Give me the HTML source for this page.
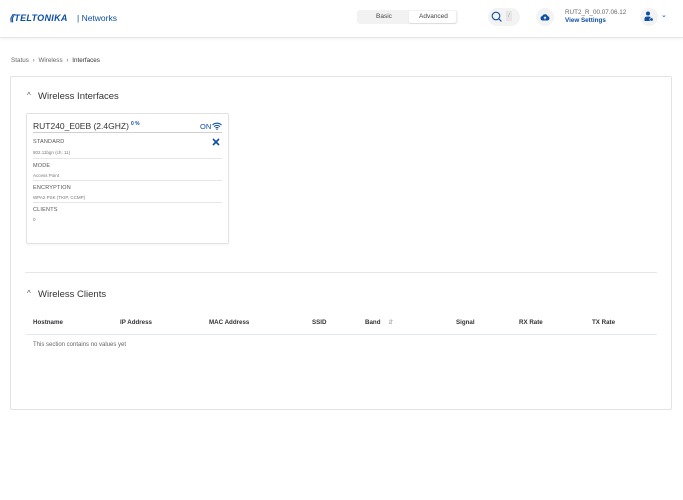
<!DOCTYPE html>
<html><head><meta charset="utf-8"><style>
*{margin:0;padding:0;box-sizing:border-box}
body{width:683px;height:500px;background:#fff;font-family:"Liberation Sans",sans-serif;position:relative;overflow:hidden;color:#333}
.a{position:absolute;white-space:nowrap}
.hdr{position:absolute;left:0;top:0;width:683px;height:38px;background:#fff;border-bottom:1px solid #e6e6e6;box-shadow:0 1px 3px rgba(0,0,0,.06)}
.blue{color:#0d4fa3}
.panel{position:absolute;left:10px;top:76px;width:662px;height:334px;border:1px solid #e3e3e3;border-radius:2px}
.card{position:absolute;left:26px;top:113px;width:203px;height:131px;border:1px solid #e3e3e3;border-radius:2px;box-shadow:0 1px 2px rgba(0,0,0,.05)}
.lbl{font-size:5.5px;color:#555;letter-spacing:.2px}
.val{font-size:4.5px;color:#777}
.hl{position:absolute;height:1px;background:#e6e6e6}
.th{font-size:6.2px;font-weight:bold;color:#333}
</style></head><body>
<div class="hdr"></div>
<div class="a" style="left:9px;top:13px;font-size:9px;font-weight:bold;font-style:italic;color:#0d4fa3;letter-spacing:.3px">⟪TELTONIKA</div>
<div class="a" style="left:77px;top:13px;font-size:8.5px;color:#0d4fa3">| Networks</div>
<div class="a" style="left:357px;top:10px;width:101px;height:14px;background:#f2f2f2;border-radius:3px"></div>
<div class="a" style="left:409px;top:11px;width:47px;height:12px;background:#fff;border-radius:2px;box-shadow:0 1px 1px rgba(0,0,0,.1)"></div>
<div class="a" style="left:376px;top:13px;font-size:6.5px;color:#444">Basic</div>
<div class="a" style="left:419px;top:13px;font-size:6.5px;color:#444">Advanced</div>
<div class="a" style="left:488px;top:8px;width:32px;height:18px;background:#f3f3f3;border-radius:9px"></div>
<svg class="a" style="left:491px;top:11px" width="12" height="12" viewBox="0 0 12 12"><circle cx="5" cy="5" r="3.8" fill="none" stroke="#0d4fa3" stroke-width="1.1"/><line x1="7.7" y1="7.7" x2="10.5" y2="10.5" stroke="#0d4fa3" stroke-width="1.1"/></svg>
<div class="a" style="left:506px;top:11px;width:6px;height:10px;background:#e6e6e6;font-size:5px;color:#999;text-align:center;line-height:10px">/</div>
<div class="a" style="left:536px;top:8px;width:18px;height:18px;background:#f3f3f3;border-radius:9px"></div>
<svg class="a" style="left:540px;top:13px" width="10" height="8" viewBox="0 0 10 8"><path d="M2.5 7.5 A2.3 2.3 0 0 1 2.3 3 A3 3 0 0 1 7.8 3.2 A2.2 2.2 0 0 1 7.6 7.5Z" fill="#0d4fa3"/><path d="M5 6.5V4M3.8 5.2L5 4 6.2 5.2" stroke="#fff" stroke-width=".8" fill="none"/></svg>
<div class="a" style="left:565px;top:9px;font-size:6.3px;color:#666">RUT2_R_00.07.06.12</div>
<div class="a blue" style="left:565px;top:17px;font-size:6.3px;font-weight:bold">View Settings</div>
<div class="a" style="left:640px;top:8px;width:18px;height:18px;background:#f3f3f3;border-radius:9px"></div>
<svg class="a" style="left:644px;top:11px" width="10" height="11" viewBox="0 0 10 11"><circle cx="4" cy="2.5" r="2" fill="#0d4fa3"/><path d="M0.5 10V7.5Q0.5 5.5 4 5.5Q7 5.5 7 7V10Z" fill="#0d4fa3"/><circle cx="7.5" cy="8.5" r="1.7" fill="#0d4fa3" stroke="#f3f3f3" stroke-width=".6"/></svg>
<div class="a" style="left:661px;top:11px;font-size:7px;color:#0d4fa3">⌄</div>
<div class="a" style="left:11px;top:57px;font-size:6.3px;color:#666">Status <span style="margin:0 2px">›</span> Wireless <span style="margin:0 2px">›</span> <span style="color:#333">Interfaces</span></div>
<div class="panel"></div>
<div class="a" style="left:27px;top:91px;font-size:8px;color:#555">^</div>
<div class="a" style="left:38px;top:91px;font-size:9.5px;color:#333">Wireless Interfaces</div>
<div class="card"></div>
<div class="a" style="left:33px;top:121px;font-size:8.5px;color:#333">RUT240_E0EB (2.4GHZ)</div>
<div class="a" style="left:121px;top:121px;font-size:6px;color:#cde">◠</div>
<div class="a blue" style="left:131px;top:121px;font-size:5px;font-weight:bold">0 %</div>
<div class="a blue" style="left:200px;top:122px;font-size:7.5px">ON</div>
<svg class="a" style="left:212px;top:122px" width="10" height="8" viewBox="0 0 10 8"><path d="M0.5 3A6.5 6.5 0 0 1 9.5 3M2 4.6A4.3 4.3 0 0 1 8 4.6M3.5 6.1A2.2 2.2 0 0 1 6.5 6.1" stroke="#0d4fa3" stroke-width="1.1" fill="none"/><circle cx="5" cy="7.3" r=".7" fill="#0d4fa3"/></svg>
<div class="hl" style="left:33px;top:132px;width:189px;background:#cfcfcf"></div>
<svg class="a" style="left:212px;top:138px" width="8" height="8" viewBox="0 0 8 8"><path d="M1 1L7 7M7 1L1 7" stroke="#0d4fa3" stroke-width="1.6"/><rect x="2.8" y="2.8" width="2.4" height="2.4" fill="#0d4fa3"/></svg>
<div class="a lbl" style="left:33px;top:139px">STANDARD</div>
<div class="a val" style="left:33px;top:150px">802.11bgn (ch: 11)</div>
<div class="hl" style="left:33px;top:158px;width:189px"></div>
<div class="a lbl" style="left:33px;top:163px">MODE</div>
<div class="a val" style="left:33px;top:173px">Access Point</div>
<div class="hl" style="left:33px;top:180px;width:189px"></div>
<div class="a lbl" style="left:33px;top:185px">ENCRYPTION</div>
<div class="a val" style="left:33px;top:195px">WPA2 PSK (TKIP, CCMP)</div>
<div class="hl" style="left:33px;top:202px;width:189px"></div>
<div class="a lbl" style="left:33px;top:207px">CLIENTS</div>
<div class="a val" style="left:33px;top:217px">0</div>
<div class="hl" style="left:25px;top:272px;width:632px"></div>
<div class="a" style="left:27px;top:289px;font-size:8px;color:#555">^</div>
<div class="a" style="left:38px;top:289px;font-size:9.5px;color:#333">Wireless Clients</div>
<div class="a th" style="left:33px;top:319px">Hostname</div>
<div class="a th" style="left:120px;top:319px">IP Address</div>
<div class="a th" style="left:209px;top:319px">MAC Address</div>
<div class="a th" style="left:312px;top:319px">SSID</div>
<div class="a th" style="left:365px;top:319px">Band <span style="font-weight:normal;color:#999;margin-left:6px">⇵</span></div>
<div class="a th" style="left:456px;top:319px">Signal</div>
<div class="a th" style="left:519px;top:319px">RX Rate</div>
<div class="a th" style="left:592px;top:319px">TX Rate</div>
<div class="hl" style="left:26px;top:334px;width:631px;background:#e2e8ee"></div>
<div class="a" style="left:33px;top:342px;font-size:6px;color:#666">This section contains no values yet</div>
</body></html>
